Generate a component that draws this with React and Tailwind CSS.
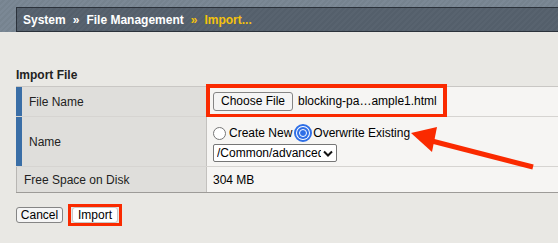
import React from 'react';

const font = "font-['Liberation_Sans',Arial,Helvetica,sans-serif]";

const Btn = ({ children, className = '' }) => (
  <span
    className={`inline-flex items-center justify-center h-4 rounded-[3px] border border-[#858585] bg-[#f5f5f5] text-[12px] leading-none text-black ${className}`}
  >
    {children}
  </span>
);

const Radio = () => (
  <span className="inline-block w-[13px] h-[13px] rounded-full border border-[#767676] bg-white" />
);

const RadioOn = () => (
  <span className="flex items-center justify-center w-[18px] h-[18px] rounded-full border-2 border-[#2f6fe6] bg-white">
    <span className="flex items-center justify-center w-[12px] h-[12px] rounded-full bg-[#2f6fe6]">
      <span className="w-[8px] h-[8px] rounded-full border border-white bg-[#2f6fe6]" />
    </span>
  </span>
);

const Label = ({ children, bar = true }) => (
  <div
    className={`w-[191px] shrink-0 flex items-center pl-[7px] bg-[#dfdedb] border-r border-r-[#c3c1be] text-[12px] text-[#222] ${
      bar ? 'border-l-[6px] border-l-[#3a6ea6]' : 'border-l border-l-[#b8b6b3]'
    }`}
  >
    {children}
  </div>
);

export default function App() {
  return (
    <div className={`relative w-[558px] h-[243px] overflow-hidden bg-[#e9e8e4] ${font}`}>
      {/* header */}
      <div className="h-8 pt-[7px] pl-4 bg-[repeating-linear-gradient(135deg,#7b8895_0px,#7b8895_2px,#76838f_2px,#76838f_4px)]">
        <div className="h-[25px] flex items-center pl-[6px] border-y border-l border-[#2b323b] bg-[repeating-linear-gradient(135deg,#58636f_0px,#58636f_2px,#545f6b_2px,#545f6b_4px)] text-[12px] font-bold text-white">
          <span>System</span>
          <span className="mx-[7px]">»</span>
          <span>File Management</span>
          <span className="mx-[7px] text-[#f4c20d]">»</span>
          <span className="text-[#f4c20d]">Import...</span>
        </div>
      </div>

      <div className="mt-[36px] ml-4 text-[12px] leading-[14px] font-bold text-[#222]">Import File</div>

      {/* table */}
      <div className="mt-1 ml-4 border-t border-[#c9c7c4]">
        <div className="flex h-[30px] border-b border-[#d6d4d1]">
          <Label>File Name</Label>
          <div className="flex-1 bg-[#f6f5f3]">
            <div className="-ml-px -mt-[3px] h-[34px] w-[241px] border-4 border-[#fa2a00] flex items-center pl-[3px] gap-[5px]">
              <Btn className="h-[19px] px-[7px] border-[#8f8f8f] bg-[#efefef]">Choose File</Btn>
              <span className="text-[12px] text-black whitespace-nowrap">blocking-pa…ample1.html</span>
            </div>
          </div>
        </div>

        <div className="flex h-[50px] border-b border-[#d6d4d1]">
          <Label>Name</Label>
          <div className="flex-1 bg-[#f6f5f3] pl-[6px] pt-[7px]">
            <div className="flex items-center h-[18px] text-[12px] text-black">
              <Radio />
              <span className="ml-[3px]">Create New</span>
              <span className="ml-[2px]">
                <RadioOn />
              </span>
              <span className="ml-px">Overwrite Existing</span>
            </div>
            <div className="mt-[2px] w-[124px] h-[18px] flex items-center border border-[#767676] rounded-[2px] bg-white pl-[3px] pr-[3px] text-[12px] text-black overflow-hidden">
              <span className="whitespace-nowrap overflow-hidden w-[104px] shrink-0">/Common/advanced</span>
              <svg width="10" height="7" viewBox="0 0 10 7" className="shrink-0 ml-[2px]">
                <path d="M1 1.5 L5 5.5 L9 1.5" fill="none" stroke="#111" strokeWidth="2" />
              </svg>
            </div>
          </div>
        </div>

        <div className="flex h-[26px] border-b border-[#9d9b98]">
          <Label bar={false}>Free Space on Disk</Label>
          <div className="flex-1 flex items-center bg-[#f6f5f3] pl-[6px] text-[12px] text-black">304 MB</div>
        </div>
      </div>

      {/* buttons */}
      <div className="mt-[11px] ml-4 flex items-center gap-[5px]">
        <Btn className="w-[47px]">Cancel</Btn>
        <div className="h-[22px] w-[54px] border-[3px] border-[#fa2a00] flex items-center justify-center">
          <Btn className="w-[46px] rounded-[2px] border-[#c8c8c8] bg-white">Import</Btn>
        </div>
      </div>

      {/* annotation arrow */}
      <svg className="absolute left-0 top-0 pointer-events-none" width="558" height="243" viewBox="0 0 558 243">
        <line x1="533" y1="167" x2="428" y2="140" stroke="#fa2a00" strokeWidth="5" />
        <polygon points="411,133 437,127 432,152" fill="#fa2a00" />
      </svg>
    </div>
  );
}
